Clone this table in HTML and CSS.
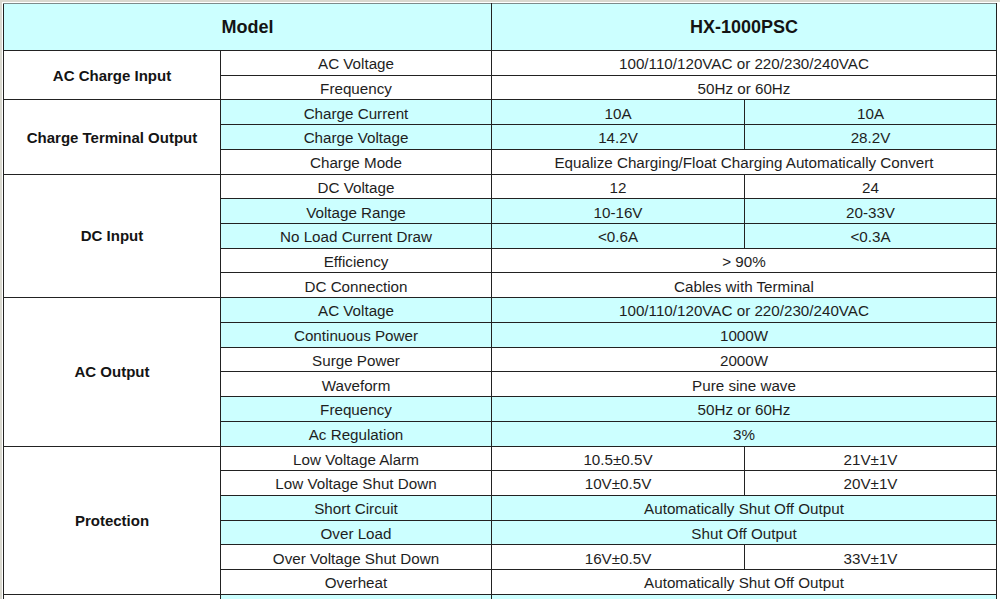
FILE: index.html
```html
<!DOCTYPE html>
<html lang="en">
<head>
<meta charset="utf-8">
<title>HX-1000PSC Specifications</title>
<link rel="stylesheet" href="styles.css">
</head>
<body>
<div class="sheet">
<table class="spec">
  <colgroup>
    <col class="w1"><col class="w2"><col class="w3"><col class="w4">
  </colgroup>
  <tr class="head">
    <th colspan="2">Model</th>
    <th colspan="2">HX-1000PSC</th>
  </tr>

  <tr>
    <td class="grp" rowspan="2">AC Charge Input</td>
    <td>AC Voltage</td>
    <td colspan="2">100/110/120VAC or 220/230/240VAC</td>
  </tr>
  <tr>
    <td>Frequency</td>
    <td colspan="2">50Hz or 60Hz</td>
  </tr>

  <tr class="cy">
    <td class="grp" rowspan="3">Charge Terminal Output</td>
    <td>Charge Current</td>
    <td>10A</td>
    <td>10A</td>
  </tr>
  <tr class="cy">
    <td>Charge Voltage</td>
    <td>14.2V</td>
    <td>28.2V</td>
  </tr>
  <tr>
    <td>Charge Mode</td>
    <td colspan="2">Equalize Charging/Float Charging Automatically Convert</td>
  </tr>

  <tr>
    <td class="grp" rowspan="5">DC Input</td>
    <td>DC Voltage</td>
    <td>12</td>
    <td>24</td>
  </tr>
  <tr class="cy">
    <td>Voltage Range</td>
    <td>10-16V</td>
    <td>20-33V</td>
  </tr>
  <tr class="cy">
    <td>No Load Current Draw</td>
    <td>&lt;0.6A</td>
    <td>&lt;0.3A</td>
  </tr>
  <tr>
    <td>Efficiency</td>
    <td colspan="2">&gt; 90%</td>
  </tr>
  <tr>
    <td>DC Connection</td>
    <td colspan="2">Cables with Terminal</td>
  </tr>

  <tr class="cy">
    <td class="grp" rowspan="6">AC Output</td>
    <td>AC Voltage</td>
    <td colspan="2">100/110/120VAC or 220/230/240VAC</td>
  </tr>
  <tr class="cy">
    <td>Continuous Power</td>
    <td colspan="2">1000W</td>
  </tr>
  <tr>
    <td>Surge Power</td>
    <td colspan="2">2000W</td>
  </tr>
  <tr>
    <td>Waveform</td>
    <td colspan="2">Pure sine wave</td>
  </tr>
  <tr class="cy">
    <td>Frequency</td>
    <td colspan="2">50Hz or 60Hz</td>
  </tr>
  <tr class="cy">
    <td>Ac Regulation</td>
    <td colspan="2">3%</td>
  </tr>

  <tr>
    <td class="grp" rowspan="6">Protection</td>
    <td>Low Voltage Alarm</td>
    <td>10.5±0.5V</td>
    <td>21V±1V</td>
  </tr>
  <tr>
    <td>Low Voltage Shut Down</td>
    <td>10V±0.5V</td>
    <td>20V±1V</td>
  </tr>
  <tr class="cy">
    <td>Short Circuit</td>
    <td colspan="2">Automatically Shut Off Output</td>
  </tr>
  <tr class="cy">
    <td>Over Load</td>
    <td colspan="2">Shut Off Output</td>
  </tr>
  <tr>
    <td>Over Voltage Shut Down</td>
    <td>16V±0.5V</td>
    <td>33V±1V</td>
  </tr>
  <tr>
    <td>Overheat</td>
    <td colspan="2">Automatically Shut Off Output</td>
  </tr>

  <tr class="cy">
    <td class="grp">&nbsp;</td>
    <td>&nbsp;</td>
    <td colspan="2">&nbsp;</td>
  </tr>
</table>
</div>
</body>
</html>
```

FILE: styles.css
```css
html, body {
  margin: 0;
  padding: 0;
  height: 599px;
  overflow: hidden;
}

body {
  background-color: #ffffff;
  background-image:
    linear-gradient(#d9d8cf, #d9d8cf),
    linear-gradient(#d9d8cf, #d9d8cf);
  background-size: 100% 2px, 2px 100%;
  background-repeat: no-repeat;
  font-family: "Liberation Sans", Arial, sans-serif;
  color: #1e1e1e;
}

.sheet {
  padding: 3px 0 0 3px;
}

.spec {
  width: 993px;
  table-layout: fixed;
  border-collapse: collapse;
  font-size: 15.2px;
  line-height: 1;
}

.w1 { width: 217px; }
.w2 { width: 271px; }
.w3 { width: 253px; }
.w4 { width: 252px; }

.spec th,
.spec td {
  border: 1px solid #222222;
  text-align: center;
  vertical-align: middle;
  padding: 2px 0 0 0;
  white-space: nowrap;
  overflow: hidden;
}

.spec tr {
  height: 24.73px;
}

.spec .head {
  height: 47px;
}

.head th {
  background: #ccffff;
  font-size: 18px;
  font-weight: bold;
  color: #141414;
  padding-top: 0;
  border-top-color: #7d8a8a;
}

.cy td {
  background: #ccffff;
}

.spec td.grp {
  background: #ffffff;
  font-size: 15px;
  font-weight: bold;
  color: #141414;
  padding-top: 0;
}
```
